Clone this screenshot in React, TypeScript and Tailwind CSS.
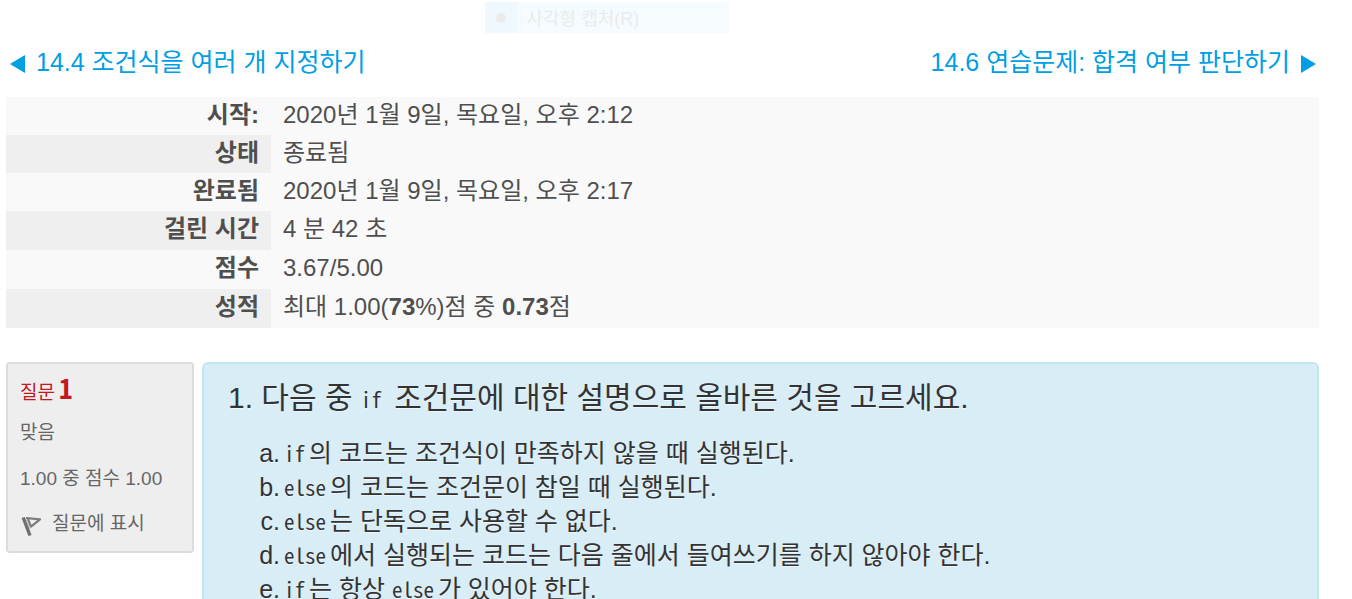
import type { ReactNode } from "react";

const summary: { label: string; value: ReactNode }[] = [
  { label: "시작:", value: "2020년 1월 9일, 목요일, 오후 2:12" },
  { label: "상태", value: "종료됨" },
  { label: "완료됨", value: "2020년 1월 9일, 목요일, 오후 2:17" },
  { label: "걸린 시간", value: "4 분 42 초" },
  { label: "점수", value: "3.67/5.00" },
  {
    label: "성적",
    value: (
      <>
        최대 1.00(<b>73</b>%)점 중 <b>0.73</b>점
      </>
    ),
  },
];

function Code({ children }: { children: ReactNode }) {
  return (
    <code className="mr-1 font-['Noto_Sans_Mono_CJK_KR','Liberation_Mono',monospace] text-[21px] leading-none">
      {children}
    </code>
  );
}

const options: { letter: string; text: ReactNode }[] = [
  { letter: "a.", text: <><Code>if</Code>의 코드는 조건식이 만족하지 않을 때 실행된다.</> },
  { letter: "b.", text: <><Code>else</Code>의 코드는 조건문이 참일 때 실행된다.</> },
  { letter: "c.", text: <><Code>else</Code>는 단독으로 사용할 수 없다.</> },
  { letter: "d.", text: <><Code>else</Code>에서 실행되는 코드는 다음 줄에서 들여쓰기를 하지 않아야 한다.</> },
  { letter: "e.", text: <><Code>if</Code>는 항상 <Code>else</Code>가 있어야 한다.</> },
];

function FlagIcon() {
  return (
    <svg width="24" height="24" viewBox="0 0 24 24" fill="none" className="mt-1.5" aria-hidden="true">
      <path d="M3.2 2.5 10 20.5" stroke="#6f6f6f" strokeWidth="3.4" />
      <path d="M6 3 20 4.4 11 11.6 8 4.2" stroke="#7c7c7c" strokeWidth="2.2" strokeLinejoin="round" />
      <path d="M6 4.5 10 14" stroke="#b5b5b5" strokeWidth="1" />
    </svg>
  );
}

function Navigation() {
  return (
    <nav className="flex justify-between pr-[3px] pl-1 text-[25px] leading-[34px] text-[#009ee5]">
      <a href="#previous" className="flex items-center gap-2.5">
        <svg width="16" height="18" viewBox="0 0 16 18" className="mt-1" aria-hidden="true">
          <path d="M0 9 15 0v18z" fill="currentColor" />
        </svg>
        14.4 조건식을 여러 개 지정하기
      </a>
      <a href="#next" className="flex items-center gap-2.5">
        14.6 연습문제: 합격 여부 판단하기
        <svg width="16" height="18" viewBox="0 0 16 18" className="mt-1" aria-hidden="true">
          <path d="M16 9 1 0v18z" fill="currentColor" />
        </svg>
      </a>
    </nav>
  );
}

export default function App() {
  return (
    <div className="h-screen overflow-hidden bg-white pr-[33px] pl-1.5 font-['Liberation_Sans','Noto_Sans_CJK_KR',sans-serif] text-[#4f4f4f]">
      <div className="flex h-[45px] justify-center pt-0.5">
        <div className="mr-28 flex h-[31px] w-[244px] items-center bg-[#f5fbff] text-lg text-[#ebebeb]">
          <span className="flex h-full w-8 items-center justify-center bg-[#eff7ff]">
            <span className="size-2.5 rounded-full bg-[#ebebeb]" />
          </span>
          <span className="pt-0.5 pl-2.5">사각형 캡처(R)</span>
        </div>
      </div>

      <Navigation />

      <table className="mt-[18px] w-full border-collapse text-2xl leading-[34px]">
        <tbody>
          {summary.map((row) => (
            <tr key={row.label} className="group h-[38px] bg-[#f9f9f9] nth-[n+4]:h-[39px]">
              <th
                scope="row"
                className="w-[265px] px-3 pt-px text-right align-top font-bold group-even:bg-[#efefef]"
              >
                {row.label}
              </th>
              <td className="px-3 pt-px align-top">{row.value}</td>
            </tr>
          ))}
        </tbody>
      </table>

      <main className="mt-[34px] flex items-start gap-2">
        <aside className="w-[188px] shrink-0 rounded-sm border-2 border-[#dcdcdc] bg-[#eee] px-3 pt-2.5 pb-3 text-[19px] leading-7 text-[#666]">
          <h3 className="flex items-baseline gap-1 text-[#c2191f]">
            질문
            <span className="font-['Noto_Sans_Mono_CJK_KR','Noto_Sans_CJK_KR',sans-serif] text-[27px] leading-7 font-bold">1</span>
          </h3>
          <p className="mt-3">맞음</p>
          <p className="mt-[18px]">1.00 중 점수 1.00</p>
          <a href="#flag" className="mt-4 flex items-center gap-2">
            <FlagIcon />
            질문에 표시
          </a>
        </aside>

        <section className="min-w-0 flex-1 rounded-md border-2 border-[#bce8f1] bg-[#d9edf7] px-6 pt-4 pb-6 text-[#333] text-shadow-[0_1px_0_rgba(255,255,255,0.5)]">
          <h2 className="text-[30px] leading-9">
            1. 다음 중 <Code>if</Code> 조건문에 대한 설명으로 올바른 것을 고르세요.
          </h2>
          <ol className="mt-5 pl-[30px] text-[25px] leading-[34px]">
            {options.map((option) => (
              <li key={option.letter} className="flex gap-1">
                <span className="w-[22px] text-right">{option.letter}</span>
                <span>{option.text}</span>
              </li>
            ))}
          </ol>
        </section>
      </main>
    </div>
  );
}
